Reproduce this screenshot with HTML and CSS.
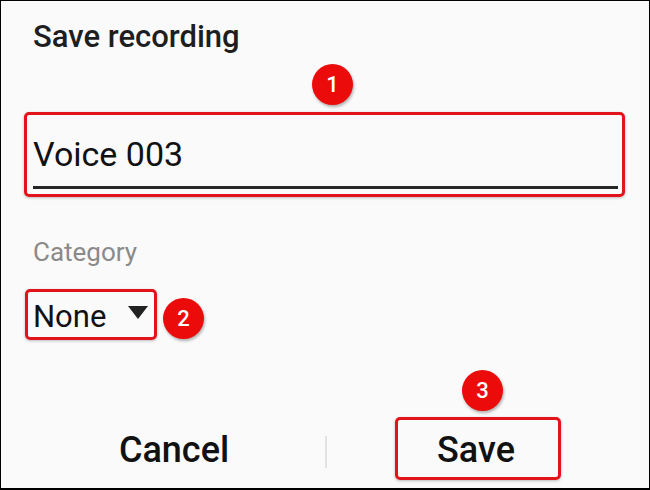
FILE: index.html
```html
<!DOCTYPE html>
<html>
<head>
<meta charset="utf-8">
<link rel="stylesheet" href="styles.css">
</head>
<body>
<div class="frame">
  <div class="title">Save recording</div>

  <div class="mark field">
    <div class="field-text">Voice 003</div>
    <div class="field-line"></div>
  </div>

  <div class="label">Category</div>

  <div class="mark select">
    <span class="select-text">None</span>
    <span class="caret"></span>
  </div>

  <div class="actions">
    <div class="btn cancel">Cancel</div>
    <div class="divider"></div>
    <div class="btn mark save">Save</div>
  </div>

  <div class="badge b1">1</div>
  <div class="badge b2">2</div>
  <div class="badge b3">3</div>
</div>
</body>
</html>
```

FILE: styles.css
```css
* { box-sizing: border-box; }
html, body { margin: 0; padding: 0; background: #ffffff; }
body { font-family: Roboto, "Liberation Sans", sans-serif; }

.frame {
  position: relative;
  width: 650px;
  height: 490px;
  border: 1px solid #000;
  border-bottom-width: 2px;
  background: #fafafa;
  display: flex;
  flex-direction: column;
  align-items: flex-start;
  overflow: hidden;
}

.title {
  margin: 18px 0 0 32px;
  font-size: 31px;
  line-height: 36px;
  font-weight: 500;
  color: #1e1e1e;
}

.mark {
  border: 3px solid #e3131c;
  border-radius: 5px;
  box-shadow: 0 1px 3px rgba(0,0,0,0.25);
}

.field {
  margin: 57px 0 0 23px;
  width: 601px;
  height: 85px;
  padding: 20px 4px 5px 6px;
}
.field-text {
  font-size: 34px;
  line-height: 39px;
  color: #111;
}
.field-line {
  margin-top: 12px;
  height: 3px;
  background: #262626;
}

.label {
  margin: 40px 0 0 32px;
  font-size: 26px;
  line-height: 30px;
  color: #8a8a8a;
}

.select {
  margin: 22px 0 0 24px;
  width: 132px;
  height: 51px;
  padding: 0 0 0 5px;
  display: flex;
  align-items: center;
}
.select-text {
  font-size: 31px;
  line-height: 37px;
  color: #111;
  margin-top: 4px;
}
.caret {
  margin-left: 22px;
  width: 0;
  height: 0;
  border-left: 10px solid transparent;
  border-right: 10px solid transparent;
  border-top: 13px solid #222;
  margin-top: -4px;
}

.actions {
  margin: 77px 0 0 0;
  display: flex;
  align-items: center;
}
.btn {
  flex: 0 0 166px;
  width: 166px;
  height: 63px;
  display: flex;
  align-items: center;
  justify-content: center;
  font-size: 36px;
  font-weight: 500;
  color: #111;
  padding-top: 2px;
}
.cancel { margin-left: 90px; }
.save { padding-right: 4px; }
.divider {
  flex: 0 0 2px;
  height: 32px;
  background: #e2e2e2;
  margin: 6px 68px 0 68px;
}

.badge {
  position: absolute;
  width: 41px;
  height: 41px;
  border-radius: 50%;
  background: #ec0b0b;
  color: #fff;
  font-size: 22px;
  font-weight: 500;
  line-height: 41px;
  text-align: center;
  box-shadow: 1px 2px 3px rgba(0,0,0,0.3);
}
.b1 { left: 311px; top: 63px; }
.b2 { left: 162px; top: 297px; }
.b3 { left: 461px; top: 369px; }
```
